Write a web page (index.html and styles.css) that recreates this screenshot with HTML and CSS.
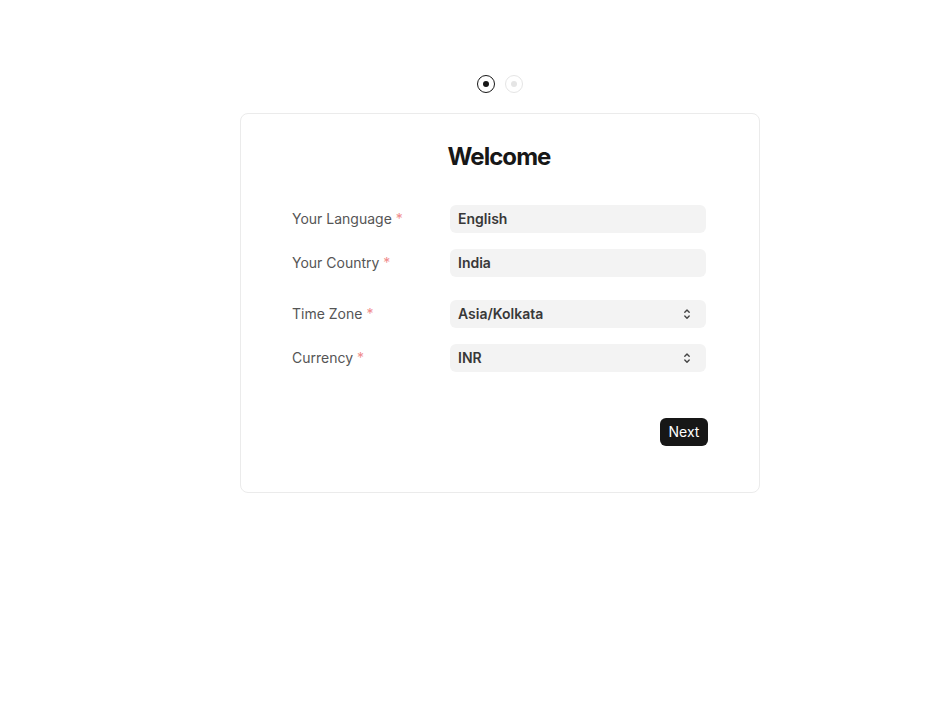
FILE: index.html
```html
<!DOCTYPE html>
<html>
<head>
<meta charset="utf-8">
<link rel="stylesheet" href="styles.css">
</head>
<body>
<div class="page">
  <div class="steps">
    <span class="step active"><span class="dot"></span></span>
    <span class="step"><span class="dot"></span></span>
  </div>
  <div class="card">
    <h1 class="title">Welcome</h1>
    <div class="form">
      <div class="row">
        <label class="label">Your Language <span class="req">*</span></label>
        <div class="input">English</div>
      </div>
      <div class="row">
        <label class="label">Your Country <span class="req">*</span></label>
        <div class="input">India</div>
      </div>
      <div class="row select-row">
        <label class="label">Time Zone <span class="req">*</span></label>
        <div class="input select">Asia/Kolkata
          <svg class="chev" width="10" height="14" viewBox="0 0 10 14" fill="none" stroke="#444" stroke-width="1.4" stroke-linecap="round" stroke-linejoin="round"><path d="M2.8 5.2 L5 3 L7.2 5.2"/><path d="M2.8 9 L5 11.2 L7.2 9"/></svg>
        </div>
      </div>
      <div class="row">
        <label class="label">Currency <span class="req">*</span></label>
        <div class="input select">INR
          <svg class="chev" width="10" height="14" viewBox="0 0 10 14" fill="none" stroke="#444" stroke-width="1.4" stroke-linecap="round" stroke-linejoin="round"><path d="M2.8 5.2 L5 3 L7.2 5.2"/><path d="M2.8 9 L5 11.2 L7.2 9"/></svg>
        </div>
      </div>
    </div>
    <div class="actions">
      <button class="btn">Next</button>
    </div>
  </div>
</div>
</body>
</html>
```

FILE: styles.css
```css
* { box-sizing: border-box; }
html, body { margin: 0; padding: 0; background: #fff; }
body {
  font-family: Inter, "Noto Sans", sans-serif;
  color: #171717;
}
.page {
  padding-left: 240px;
  padding-top: 75px;
}
.steps {
  width: 520px;
  display: flex;
  justify-content: center;
  gap: 10px;
  height: 18px;
}
.step {
  width: 18px;
  height: 18px;
  border-radius: 50%;
  border: 1.5px solid #e5e5e5;
  display: flex;
  align-items: center;
  justify-content: center;
}
.step .dot {
  width: 6px;
  height: 6px;
  border-radius: 50%;
  background: #e5e5e5;
}
.step.active { border-color: #171717; }
.step.active .dot { background: #171717; }
.card {
  margin-top: 20px;
  width: 520px;
  height: 380px;
  border: 1px solid #ebebeb;
  border-radius: 8px;
  padding: 27px 51px 0 51px;
}
.title {
  margin: 0 0 0 -2px;
  text-align: center;
  font-size: 24px;
  line-height: 32px;
  font-weight: 700;
  letter-spacing: -0.04em;
  color: #171717;
}
.form {
  margin-top: 32px;
  display: flex;
  flex-direction: column;
  gap: 16px;
}
.row {
  display: flex;
  align-items: flex-start;
}
.select-row { margin-top: 7px; }
.label {
  width: 158px;
  font-size: 14px;
  line-height: 26px;
  padding-top: 1px;
  color: #555555;
}
.req { color: #f08c8c; }
.input {
  width: 256px;
  height: 28px;
  background: #f3f3f3;
  border-radius: 6px;
  padding: 0 8px;
  font-size: 14px;
  font-weight: 600;
  line-height: 28px;
  color: #383838;
  display: flex;
  align-items: center;
  justify-content: space-between;
}
.chev { margin-right: 6px; }
.actions {
  margin-top: 46px;
  display: flex;
  justify-content: flex-end;
}
.btn {
  font-family: Inter, "Noto Sans", sans-serif;
  font-size: 14px;
  background: #171717;
  color: #fff;
  border: none;
  border-radius: 6px;
  height: 28px;
  min-width: 48px;
  padding: 0 8px;
  line-height: 28px;
}
```
